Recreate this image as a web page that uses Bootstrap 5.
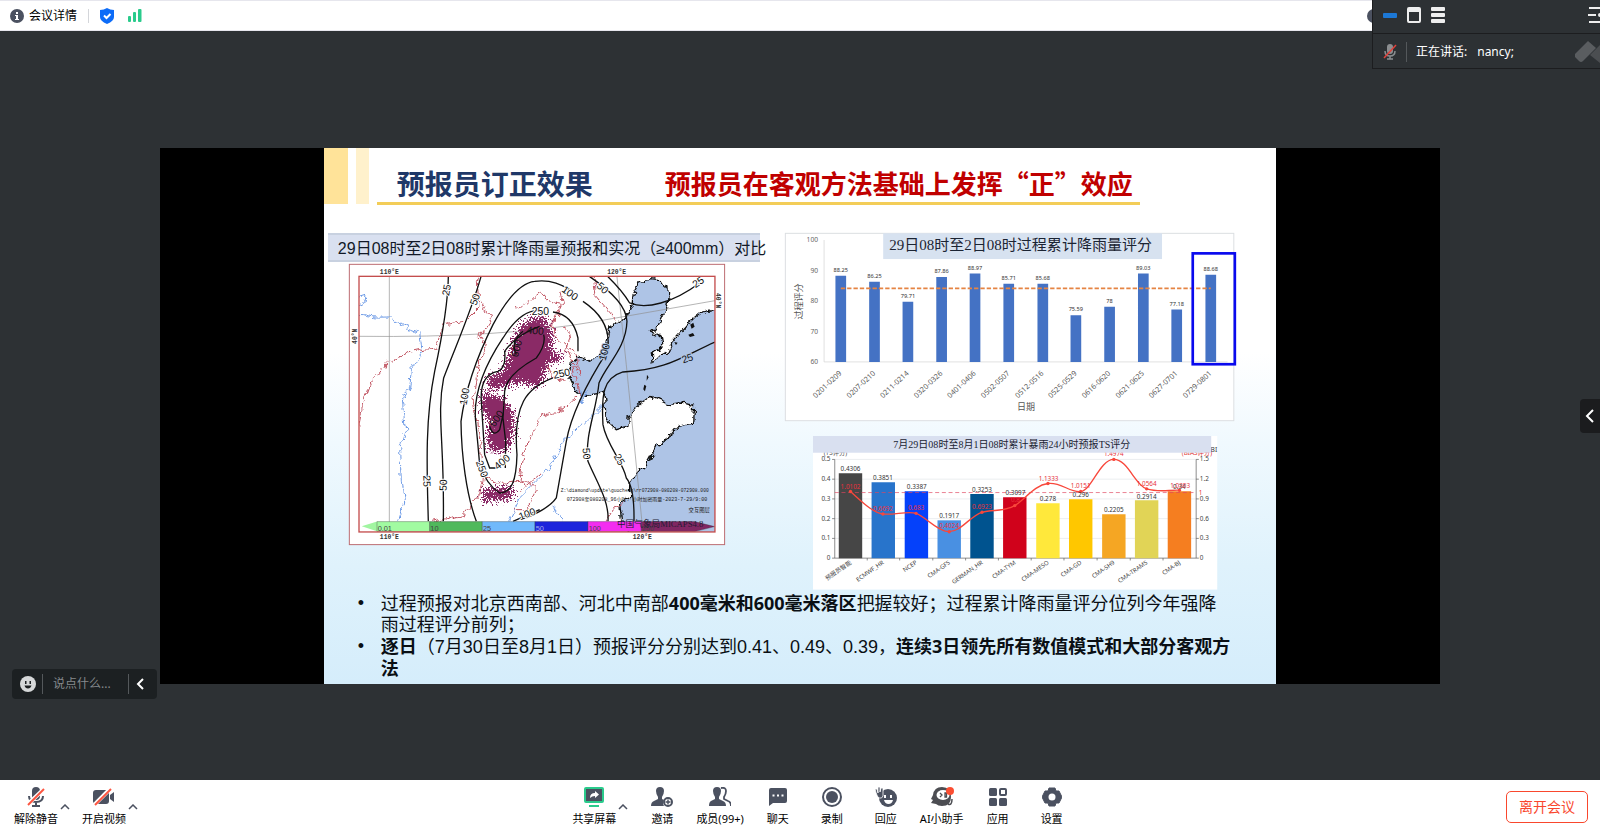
<!DOCTYPE html>
<html lang="zh-CN">
<head>
<meta charset="utf-8">
<meta name="viewport" content="width=device-width, initial-scale=1">
<title>会议</title>
<link href="https://cdn.jsdelivr.net/npm/bootstrap@5.3.0/dist/css/bootstrap.min.css" rel="stylesheet">
<style>
:root{--ink:#4b5160;--dark:#2d3134;--green:#2acb8c;--red:#f9472d}
body{font-family:"Noto Sans","Noto Sans CJK SC",sans-serif;font-size:12px;line-height:16px;color:#000;background:var(--dark)}
svg{display:block;flex:none}
.topline{height:31px;border-top:1px solid #e6e6ed;border-bottom:1px solid #e6e6ed}
.topline .btn,.tool{font-size:12px;line-height:16px;color:#000;border:0;padding:0}
.topline .btn{margin-left:10px;gap:5px}
.sep{width:1px;background:#d4d6da}
.topline .sep{height:14px;margin:0 11px}
.signal{margin-left:14px}
.info-end{margin-right:219px}
.stage{padding-top:21px;background:var(--dark)}
.video{width:80%;background:#000}
.slide{width:74.4%;background:linear-gradient(#fff 0,#fff 38%,#f0f9fe 55%,#dff2fc 78%,#d5edfb 100%)}
.slide-head{height:57px;padding-right:136px}
.tab-a{width:24px;height:56px;background:#ffe399}
.tab-b{width:13px;height:56px;background:#fff1cc}
.headline{min-width:0;border-bottom:3px solid #f3cd58;padding:17px 0 0 20px;white-space:nowrap}
.headline h1{font-size:28px;line-height:38px;color:#1f3868;font-weight:700}
.headline h2{font-size:26px;line-height:36px;color:#c00000;font-weight:700;padding-left:72px;font-family:"Noto Sans CJK SC",sans-serif}
.figures{display:grid;grid-template-columns:minmax(0,432fr) minmax(0,449fr);column-gap:25px;padding:28px 42px 0 4px}
.caption-l{height:29px;padding-left:10px;background:#d9e0f0;border-top:2px solid #c8d1e0;border-bottom:2px solid #c8d1e0;font-size:16px;line-height:27px;white-space:nowrap;color:#111827;font-family:"Liberation Sans","Noto Sans CJK SC",sans-serif}
.map-box{width:87%;margin:2px 0 0 21px}
.ts-box{width:90%;margin:15px 0 0 28px}
.figures svg{width:100%;height:auto;overflow:visible}
.points{font-family:"Liberation Sans","Noto Sans CJK SC",sans-serif;font-size:18px;line-height:21px;padding:3px 44px 4px 57px;color:#0a0f14;list-style:none}
.points b{font-family:"Noto Sans","Noto Sans CJK SC",sans-serif}
.points li{position:relative}
.points li::before{content:"•";position:absolute;left:-23px}
.saybox{left:12px;bottom:81px;width:145px;height:30px;background:#1c2022;border-radius:4px;padding:0 8px}
.saybox input{width:72px;background:none;border:0;outline:0;color:#ddd;font-size:12px;padding:0}
.saybox input::placeholder{color:#85898c;opacity:1}
.saybox .sep,.floater .sep{background:#54585b;height:20px}
.saybox .sep{margin:0 6px}
.drawer{right:0;top:368px;width:20px;height:34px;background:#1b1c1e;border:0;border-radius:4px 0 0 4px;padding:0 0 0 5px}
.floater{top:0;right:0;width:228px;height:69px;background:var(--dark);border:1px solid #1c1d1f;border-width:0 0 1px 1px;color:#fff;overflow:hidden}
.floater-top{height:34px;border-bottom:1px solid #1c1d1f;padding:0 0 4px 10px}
.floater-icons{gap:10px}
.speaking{height:36px;padding-left:10px}
.speaking .sep{margin:0 9px}
.speaking .who{margin-left:10px}
.floater button,.saybox button{background:none;border:0;padding:0}
.bottombar{background:#fff;height:52px;padding:2px 12px 0 14px}
.tool{background:none;font-size:11px;min-width:40px}
.tool svg{margin:0 auto 4px}
.chev{background:none;border:0;padding:0}
.chev svg{margin-left:2px}
.mid{gap:14px}
.leave{width:82px;height:32px;border:1px solid var(--red);color:var(--red);font-size:14px;line-height:20px;border-radius:5px;padding:0;background:#fff}
</style>
</head>
<body>
<div class="d-flex flex-column min-vh-100 position-relative overflow-hidden">
<header class="topline bg-white d-flex align-items-center">
  <button class="btn d-flex align-items-center" type="button">
    <svg width="14" height="14" viewBox="0 0 14 14"><circle cx="7" cy="7" r="7" fill="#4b5160"/><path d="M6 3h2v2H6zM5 6h3v4h1v1H5v-1h1V7H5z" fill="#fff"/></svg>
    <span>会议详情</span>
  </button>
  <span class="sep"></span>
  <svg width="14" height="16" viewBox="0 0 14 16"><path d="M7 0q3 2 7 2v7q0 4-7 7-7-3-7-7V2q4 0 7-2z" fill="#0c6cf8"/><path d="M4 7.500l2.500 2.500 4-4" stroke="#fff" stroke-width="2" fill="none"/></svg>
  <svg class="signal" width="14" height="13" viewBox="0 0 14 13" fill="#2acb8c"><rect y="7" width="3" height="6" rx="1"/><rect x="5" y="3" width="3" height="10" rx="1"/><rect x="10" width="3.500" height="13" rx="1"/></svg>
  <svg class="ms-auto info-end" width="14" height="14" viewBox="0 0 14 14"><circle cx="7" cy="7" r="7" fill="#4b5160"/></svg>
</header>

<main class="stage flex-grow-1 d-flex align-items-center justify-content-center position-relative">
  <div class="video d-flex justify-content-center">
    <article class="slide">
      <div class="slide-head d-flex">
        <span class="tab-a flex-shrink-0"></span><span class="tab-b flex-shrink-0 ms-2"></span>
        <div class="headline flex-grow-1 d-flex ms-2"><h1 class="m-0">预报员订正效果</h1><h2 class="m-0">预报员在客观方法基础上发挥“正”效应</h2></div>
      </div>
      <div class="figures">
        <div>
          <div class="caption-l">29日08时至2日08时累计降雨量预报和实况（≥400mm）对比</div>
          <div class="map-box">
<svg viewBox="28 28 1128 843" font-family="Liberation Sans, Noto Sans CJK SC, sans-serif">
<defs>
<filter id="rough" x="-5%" y="-5%" width="110%" height="110%"><feTurbulence type="fractalNoise" baseFrequency=".045" numOctaves="3" seed="4"/><feDisplacementMap in="SourceGraphic" scale="26" xChannelSelector="R" yChannelSelector="G"/></filter>
<filter id="grain" x="-10%" y="-10%" width="120%" height="120%"><feTurbulence type="fractalNoise" baseFrequency=".2" numOctaves="3" seed="8"/><feDisplacementMap in="SourceGraphic" scale="75" xChannelSelector="R" yChannelSelector="G"/></filter>
<clipPath id="frame"><rect x="58" y="66" width="1068" height="766"/></clipPath>
</defs>
<rect x="29" y="29" width="1126" height="841" fill="#fff" stroke="#bd6c72" stroke-width="3"/>
<g clip-path="url(#frame)">
<path filter="url(#rough)" d="M1150 155L1085 172 1040 210 1000 255 985 290 937 318 935 295 970 280 965 245 935 232 960 205 985 150 990 115 965 75 925 72 900 85 880 120 878 150 860 190 812 215 803 255 798 290 750 320 715 305 695 320 688 370 705 405 740 422 790 415 795 430 800 500 830 525 865 515 865 490 885 460 930 425 985 450 1020 445 1065 452 1062 505 1015 515 990 545 950 575 920 630 885 665 870 690 870 730 840 745 845 790 880 850H1150Z" fill="#aec4e6" stroke="#111" stroke-width="4"/>
<g fill="#111"><path d="M922 360l5 8-6 10zM914 390l6 4-4 16-5-6zM1052 210l9-6 4 12-9 6zM1046 240l14-5 5 8-14 4zM1004 262l10 2-5 7z"/></g>
<g fill="none" stroke="#8f8f8f" stroke-width="2"><path d="M149 66V832M832 66L860 330 910 832M58 245Q480 250 760 202L1126 138"/></g>
<g fill="none" stroke="#6d9be6" stroke-width="3" filter="url(#rough)"><path d="M58 178Q100 190 150 187L190 215 240 235 248 290 215 345 210 400 188 440 198 530 180 590 185 680 195 740 176 800M58 125l18-6-4 30-14 8M510 800L540 730 620 650 670 560 740 500 790 450M640 750l10 25 20 25"/><path d="M720 405l10 40 10-35" fill="#aec4e6"/></g>
<g fill="none" stroke="#c0515f" stroke-width="3" filter="url(#rough)"><path d="M58 510l10-50 25-70 50-65 60-30 45-10 40-5 20-70 70-10 40-40-5-80 10-40M425 135l30 60-35 50 20 30-25 60-15 100 20 120 10 110 40 20 90-10 30 30-30 60-40 0M280 800l90-20 50-60 10-60M530 160l40-20 35-30 20 30 40 10-20 40-5 50 70 60 8 60-40-80 20-50-25-10M760 66l10 60 60 70M700 340l20 80-50 45-70 25-50 110-10 60 20 40M545 705l60-50M800 800l20-40 30-10M620 320l20 50 40 10M660 110l10 40-20 40"/></g>
<g fill="#8a2a66" filter="url(#grain)"><path d="M580 185L625 195 640 245 635 290 672 300 655 320 622 325 615 370 595 395 540 385 450 405 440 370 490 350 520 260 545 210ZM425 415L490 425 525 480 520 550 500 590 450 590 440 550 450 500 425 465ZM430 705L520 695 520 730 430 742Z"/></g>
<g fill="none" stroke="#111" stroke-width="4">
<path d="M326 66C325 160 300 280 285 350 255 500 262 650 266 800M424 66C395 170 350 270 312 370 290 480 315 560 311 800M410 800C380 720 365 600 364 500 375 420 400 330 460 210 500 135 540 85 585 80Q640 72 690 105M730 140Q820 200 803 290 700 450 680 560L650 730Q630 760 560 790M520 800L600 765"/>
<path d="M805 66Q850 110 870 145C920 165 1000 145 1080 85M750 66Q860 140 862 200C860 280 800 330 778 385 770 470 735 540 745 620 770 680 810 740 805 800M1126 262C1020 310 980 345 850 352 790 370 785 420 790 510 800 570 850 620 860 670Q885 700 883 800"/>
<path d="M610 170Q550 155 490 250C430 340 400 420 408 500Q415 570 420 630 440 690 480 715C515 715 530 680 532 600 520 450 560 400 640 370M640 172Q700 180 715 250L715 290"/>
<path d="M600 215Q530 240 495 290 500 340 475 350 420 360 425 440L435 600 450 640 475 640M612 240Q620 270 590 310 500 360 495 410L490 490 498 560 497 640M450 515Q460 550 480 525L490 480M550 230Q510 260 530 300"/></g>
<g font-size="31" fill="#111" stroke="#fff" stroke-width="6" paint-order="stroke" text-anchor="middle">
<text transform="translate(331 108) rotate(-80)">25</text><text transform="translate(416 138) rotate(-70)">50</text><text transform="translate(685 124) rotate(35)">100</text><text transform="translate(782 108) rotate(42)">50</text><text transform="translate(1082 91) rotate(-35)">25</text><text transform="translate(385 427) rotate(-80)">100</text><text transform="translate(668 367) rotate(-12)">250</text><text transform="translate(251 680) rotate(88)">25</text><text transform="translate(321 692) rotate(-88)">50</text><text transform="translate(730 598) rotate(85)">50</text><text transform="translate(830 620) rotate(60)">25</text><text transform="translate(417 646) rotate(70)">250</text><text transform="translate(494 630) rotate(-40)">400</text><text transform="translate(566 788) rotate(-20)">100</text><text x="602" y="182">250</text></g>
<g font-size="31" fill="#111" text-anchor="middle"><text transform="translate(586 239) rotate(5)">400</text><text transform="translate(541 284) rotate(-75)">600</text><text transform="translate(479 498) rotate(-55)">600</text><g stroke="#aec4e6" stroke-width="6" paint-order="stroke"><text transform="translate(804 295) rotate(-75)">100</text><text transform="translate(1047 321) rotate(-20)">25</text></g></g>
<g font-family="Liberation Mono, Noto Sans CJK SC, monospace" font-size="14" fill="#222"><text x="663" y="712">Z:\diamond\update\guocheng\rr072908-080208-072908.000</text><text x="681" y="740" font-size="15">072908至080208_96小时:  小时加密雨量-2023-7-29/9:00</text><text x="1047" y="771" font-size="16">交互图层</text></g>
<g stroke="#333" stroke-width="1"><path d="M66 815L112 801V830Z" fill="#a1f5a1" stroke="none"/><path d="M112 801h158v30H112z" fill="#a1fba1"/><path d="M270 801h158v30H270z" fill="#50b95c"/><path d="M428 801h158v30H428z" fill="#70b9fb"/><path d="M586 801h159v30H586z" fill="#1d25dc"/><path d="M745 801h160v30H745z" fill="#f32df0"/><path d="M905 801h160l60 15-60 15H905z" fill="#812763"/></g>
<g font-size="22" fill="#444"><text x="114" y="828">0.01</text><text x="272" y="828">10</text><text x="430" y="828">25</text><text x="588" y="828" fill="#a8afe8">50</text><text x="747" y="828">100</text><text x="907" y="828">250</text></g>
<text x="832" y="816" font-size="26" fill="#241b35" font-family="Liberation Serif, Noto Sans CJK SC, serif">中国气象局MICAPS4.8</text>
</g>
<rect x="58" y="65" width="1068" height="767" fill="none" stroke="#c44d4d" stroke-width="4"/>
<g font-family="Liberation Mono, monospace" font-size="19" font-weight="700" fill="#333" text-anchor="middle"><text x="149" y="58">110°E</text><text x="831" y="58">120°E</text><text x="149" y="854">110°E</text><text x="908" y="854">120°E</text><text transform="translate(52 245) rotate(-90)">40°N</text><text transform="translate(1130 138) rotate(90)">40°N</text></g>
</svg>
          </div>
        </div>
        <div>
<svg viewBox="46 26 1345 562" font-family="Noto Sans, Noto Sans CJK SC, sans-serif">
<rect x="47" y="27" width="1343" height="561" fill="#fff" stroke="#dcdfe2" stroke-width="3"/>
<rect x="340" y="27" width="835" height="77" fill="#d7e2f0"/>
<text x="358" y="78" font-size="45" fill="#1b2433" font-family="Liberation Serif, Noto Sans CJK SC, serif">29日08时至2日08时过程累计降雨量评分</text>
<path d="M163 47V412H1371" fill="none" stroke="#d0d0d0" stroke-width="2"/>
<g fill="#4472c4"><path d="M197 154h32v258h-32zM298 172h32v240h-32zM398 232h32v180h-32zM499 158h32v254h-32zM599 147h32v265h-32zM700 178h32v234h-32zM802 178h32v234h-32zM901 272h32v140h-32zM1002 247h32v165h-32zM1103 147h32v265h-32zM1203 255h32v157h-32zM1305 151h32v261h-32z"/></g>
<path d="M213 192H1321" stroke="#e58443" stroke-width="5" stroke-dasharray="13 6"/>
<g font-size="17" fill="#333" text-anchor="middle"><text x="213" y="144">88.25</text><text x="314" y="161">86.25</text><text x="414" y="220">79.71</text><text x="515" y="147">87.86</text><text x="615" y="136">88.97</text><text x="716" y="167">85.71</text><text x="818" y="167">85.68</text><text x="917" y="261">75.59</text><text x="1018" y="237">78</text><text x="1119" y="136">89.03</text><text x="1219" y="245">77.18</text><text x="1321" y="141">88.68</text></g>
<g font-size="20" fill="#666" text-anchor="end"><text x="145" y="54">100</text><text x="145" y="146">90</text><text x="145" y="237">80</text><text x="145" y="328">70</text><text x="145" y="419">60</text></g>
<g font-size="22" fill="#555" text-anchor="end"><text transform="translate(217 448) rotate(-43)">0201-0209</text><text transform="translate(318 448) rotate(-43)">0207-0210</text><text transform="translate(418 448) rotate(-43)">0211-0214</text><text transform="translate(519 448) rotate(-43)">0320-0326</text><text transform="translate(619 448) rotate(-43)">0401-0406</text><text transform="translate(720 448) rotate(-43)">0502-0507</text><text transform="translate(822 448) rotate(-43)">0512-0516</text><text transform="translate(921 448) rotate(-43)">0525-0529</text><text transform="translate(1022 448) rotate(-43)">0616-0620</text><text transform="translate(1123 448) rotate(-43)">0621-0625</text><text transform="translate(1223 448) rotate(-43)">0627-0701</text><text transform="translate(1325 448) rotate(-43)">0729-0801</text></g>
<g font-size="27" fill="#555" text-anchor="middle"><text x="768" y="557">日期</text><text transform="translate(98 231) rotate(-90)">过程评分</text></g>
<rect x="1267" y="87" width="126" height="332" fill="none" stroke="#0909ee" stroke-width="8"/>
</svg>
          <div class="ts-box">
<svg viewBox="38 33 1208 459" font-family="Noto Sans, Noto Sans CJK SC, sans-serif">
<rect x="38" y="33" width="1208" height="459" fill="#fff"/>
<text x="70" y="89" font-size="19" fill="#555">(TS评分)</text><text x="1140" y="89" font-size="19" fill="#d33">(BIAS评分)</text><text x="1246" y="81" font-size="20" fill="#333" text-anchor="end">BI</text>
<path d="M103 103H1183M103 162H1183M103 221H1183M103 280H1183M103 339H1183" stroke="#e3e5e8" stroke-width="2"/>
<path d="M95 103h8V398h-8M95 162h8M95 221h8M95 280h8M95 339h8M1191 103h-8V398h8M1191 162h-8M1191 221h-8M1191 280h-8M1191 339h-8M103 398H1183" fill="none" stroke="#555" stroke-width="2"/>
<path d="M200 398v7M297 398v7M396 398v7M494 398v7M592 398v7M690 398v7M788 398v7M887 398v7M986 398v7M1084 398v7" stroke="#555" stroke-width="2"/>
<path fill="#464646" d="M115 144h70v254h-70z"/><path fill="#2874cb" d="M213 171h70v227h-70z"/><path fill="#0541fa" d="M312 198h70v200h-70z"/><path fill="#4990e2" d="M410 285h70v113h-70z"/><path fill="#00538f" d="M508 206h70v192h-70z"/><path fill="#d0021b" d="M606 216h70v182h-70z"/><path fill="#ffe83b" d="M705 234h70v164h-70z"/><path fill="#ffc700" d="M803 222h70v176h-70z"/><path fill="#f5a623" d="M902 267h70v131h-70z"/><path fill="#e1d456" d="M1000 225h70v173h-70z"/><path fill="#f57e20" d="M1098 198h70v200h-70z"/>
<path d="M103 202H1183" stroke="#e0475e" stroke-width="2" stroke-dasharray="12 8"/>
<path d="M150 199C180 225 215 262 247 266S320 256 346 264 410 319 445 319 510 270 543 261 610 260 641 241 700 180 740 175 805 203 838 199 895 103 937 103 1000 180 1035 191 1100 194 1133 195" fill="none" stroke="#f8473b" stroke-width="4"/>
<g fill="#f8473b"><circle cx="150" cy="199" r="5"/><circle cx="247" cy="266" r="5"/><circle cx="346" cy="264" r="5"/><circle cx="445" cy="319" r="5"/><circle cx="543" cy="261" r="5"/><circle cx="641" cy="241" r="5"/><circle cx="740" cy="175" r="5"/><circle cx="838" cy="199" r="5"/><circle cx="937" cy="103" r="5"/><circle cx="1035" cy="191" r="5"/><circle cx="1133" cy="195" r="5"/></g>
<g font-size="19" fill="#333" text-anchor="middle"><text x="150" y="138">0.4306</text><text x="247" y="165">0.3851</text><text x="348" y="192">0.3387</text><text x="445" y="278">0.1917</text><text x="543" y="200">0.3253</text><text x="643" y="210">0.3097</text><text x="740" y="228">0.278</text><text x="838" y="216">0.296</text><text x="937" y="261">0.2205</text><text x="1035" y="220">0.2914</text><text x="1133" y="191">0.34</text></g>
<g font-size="19" fill="#e8313d" text-anchor="middle"><text x="150" y="191">1.0102</text><text x="247" y="257">0.6692</text><text x="346" y="254">0.683</text><text x="445" y="309">0.4024</text><text x="543" y="252">0.6923</text><text x="643" y="231">0.8</text><text x="742" y="166">1.1333</text><text x="838" y="188">1.0151</text><text x="937" y="94">1.4974</text><text x="1035" y="182">1.0564</text><text x="1135" y="187">1.0303</text><text x="1196" y="208">1</text></g>
<g font-size="19" fill="#444" text-anchor="end"><text x="90" y="109">0.5</text><text x="90" y="168">0.4</text><text x="90" y="227">0.3</text><text x="90" y="286">0.2</text><text x="90" y="345">0.1</text><text x="90" y="404">0</text></g>
<g font-size="19" fill="#444"><text x="1194" y="109">1.5</text><text x="1194" y="168">1.2</text><text x="1194" y="227">0.9</text><text x="1194" y="286">0.6</text><text x="1194" y="345">0.3</text><text x="1194" y="404">0</text></g>
<g font-size="18" fill="#444" text-anchor="end"><text transform="translate(154 414) rotate(-35)">预报员智能</text><text transform="translate(251 414) rotate(-35)">ECMWF_HR</text><text transform="translate(350 414) rotate(-35)">NCEP</text><text transform="translate(449 414) rotate(-35)">CMA-GFS</text><text transform="translate(547 414) rotate(-35)">GERMAN_HR</text><text transform="translate(645 414) rotate(-35)">CMA-TYM</text><text transform="translate(744 414) rotate(-35)">CMA-MESO</text><text transform="translate(842 414) rotate(-35)">CMA-GD</text><text transform="translate(941 414) rotate(-35)">CMA-SH9</text><text transform="translate(1039 414) rotate(-35)">CMA-TRAMS</text><text transform="translate(1137 414) rotate(-35)">CMA-BJ</text></g>
<rect x="38" y="33" width="1190" height="50" fill="#d9e0f0"/>
<text x="278" y="68" font-size="30" fill="#1b2433" font-family="Liberation Serif, Noto Sans CJK SC, serif">7月29日08时至8月1日08时累计暴雨24小时预报TS评分</text>
</svg>
          </div>
        </div>
      </div>
      <ul class="points m-0">
        <li>过程预报对北京西南部、河北中南部<b>400毫米和600毫米落区</b>把握较好；过程累计降雨量评分位列今年强降雨过程评分前列；</li>
        <li><b>逐日</b>（7月30日至8月1日）预报评分分别达到0.41、0.49、0.39，<b>连续3日领先所有数值模式和大部分客观方法</b></li>
      </ul>
    </article>
  </div>
  <div class="saybox position-absolute d-flex align-items-center">
    <button type="button" aria-label="表情"><svg width="16" height="16" viewBox="0 0 16 16"><circle cx="8" cy="8" r="8" fill="#d6d8d9"/><path d="M5 5h1.500v3H5zM9.500 5H11v3H9.500zM4.500 9.500h7q-.8 3-3.500 3t-3.500-3z" fill="#1c2022"/></svg></button>
    <span class="sep"></span>
    <input type="text" placeholder="说点什么..." aria-label="说点什么" class="ms-1">
    <span class="sep ms-auto"></span>
    <button class="me-1" type="button" aria-label="收起"><svg width="10" height="12" viewBox="0 0 10 12"><path d="M8 1L3 6l5 5" fill="none" stroke="#fff" stroke-width="2"/></svg></button>
  </div>
  <button class="drawer position-absolute" type="button" aria-label="展开"><svg width="10" height="14" viewBox="0 0 10 14"><path d="M8 1L2 7l6 6" fill="none" stroke="#fff" stroke-width="2"/></svg></button>
</main>

<footer class="bottombar d-flex align-items-center justify-content-between">
  <div class="d-flex align-items-center">
    <button class="tool" type="button"><svg width="20" height="20" viewBox="0 0 20 20"><rect x="6" y="0" width="8" height="13" rx="4" fill="#4b5160"/><path d="M3 9q0 6 7 6t7-6M10 15v4M6 19h8" fill="none" stroke="#4b5160" stroke-width="2"/><path d="M2 17L18 2" stroke="#fff" stroke-width="4"/><path d="M2 18L18 2" stroke="#fc5540" stroke-width="2"/></svg>解除静音</button>
    <button class="chev me-2" type="button" aria-label="音频选项"><svg width="10" height="6" viewBox="0 0 10 6"><path d="M1 5l4-4 4 4" fill="none" stroke="#4b5160" stroke-width="1.500"/></svg></button>
    <button class="tool ms-1" type="button"><svg width="22" height="20" viewBox="0 0 22 20"><rect y="3" width="16" height="14" rx="3" fill="#4b5160"/><path d="M17 8l4-3v10l-4-3z" fill="#4b5160"/><path d="M1 18L17 2" stroke="#fff" stroke-width="4"/><path d="M2 18L18 2" stroke="#fc5540" stroke-width="2"/></svg>开启视频</button>
    <button class="chev" type="button" aria-label="视频选项"><svg width="10" height="6" viewBox="0 0 10 6"><path d="M1 5l4-4 4 4" fill="none" stroke="#4b5160" stroke-width="1.500"/></svg></button>
  </div>
  <div class="mid d-flex align-items-center">
    <div class="d-flex align-items-center">
      <button class="tool" type="button"><svg width="20" height="20" viewBox="0 0 20 20"><rect x="1" y="1" width="18" height="14" rx="1" fill="#4b5160" stroke="#2acb8c" stroke-width="2"/><path d="M5 19h10" stroke="#2acb8c" stroke-width="2"/><path d="M6 11q0-5 5-5V4l4 3.500-4 3.500V9q-3 0-5 2z" fill="#fff"/></svg>共享屏幕</button>
      <button class="chev" type="button" aria-label="共享选项"><svg width="10" height="6" viewBox="0 0 10 6"><path d="M1 5l4-4 4 4" fill="none" stroke="#4b5160" stroke-width="1.500"/></svg></button>
    </div>
    <button class="tool" type="button"><svg width="22" height="20" viewBox="0 0 22 20" fill="#4b5160"><path d="M5 4q0-4 4-4t4 4q0 3-2 6v2l2 1q-2 3 0 6H0q0-4 3-5l4-2v-2Q5 7 5 4z"/><circle cx="17" cy="15" r="4" fill="#fff" stroke="#4b5160" stroke-width="2"/><path d="M16.300 12.500h1.400v1.800h1.800v1.400h-1.800v1.800h-1.400v-1.800h-1.800v-1.400h1.800z"/></svg>邀请</button>
    <button class="tool" type="button"><svg width="22" height="20" viewBox="0 0 22 20" fill="#4b5160"><path d="M4 4q0-4 4-4t4 4q0 3-2 6v2l4 2q3 1 3 5H0q0-4 2-5l4-2v-2Q4 7 4 4z"/><path d="M12 1q5-1 5 3 0 3-2 6v2l4 2q3 1 3 5" fill="none" stroke="#4b5160" stroke-width="1.800"/></svg>成员(99+)</button>
    <button class="tool" type="button"><svg width="20" height="20" viewBox="0 0 20 20"><path d="M3 1h14q2 0 2 2v11q0 2-2 2H5l-4 3V3q0-2 2-2z" fill="#4b5160"/><path d="M4.500 7.500h2v2h-2zM9 7.500h2v2H9zM13.500 7.500h2v2h-2z" fill="#fff"/></svg>聊天</button>
    <button class="tool" type="button"><svg width="20" height="20" viewBox="0 0 20 20"><circle cx="10" cy="10" r="9" fill="none" stroke="#4b5160" stroke-width="2"/><circle cx="10" cy="10" r="6" fill="#4b5160"/></svg>录制</button>
    <button class="tool" type="button"><svg width="22" height="20" viewBox="0 0 22 20"><circle cx="13" cy="11" r="9" fill="#4b5160"/><path d="M9 8h2v3H9zM15 8h2v3h-2zM9 13h9q-1 4-4.500 4T9 13z" fill="#fff"/><path d="M0 2l2 0 1 4V0h2v5l1-4h2v8q-1 3-4 2-2-1-4-9z" fill="#4b5160" stroke="#fff" stroke-width=".8"/></svg>回应</button>
    <button class="tool" type="button"><svg width="26" height="20" viewBox="0 0 26 20"><path d="M4 8Q5 0 13 0q9 0 9 10 0 9-9 9-4 0-6-2l-5-1 2-3-2-1z" fill="#4c4d52"/><ellipse cx="14" cy="8" rx="6.500" ry="5" fill="#fff"/><path d="M11 6l2 2-2 2M16 6h1.500v4H16z" stroke="#4c4d52" fill="none" stroke-width="1.300"/><path d="M19 17q4 2 4-5" fill="none" stroke="#4c4d52" stroke-width="1.500"/><circle cx="21" cy="4" r="4" fill="#fb4e32"/></svg>AI小助手</button>
    <button class="tool" type="button"><svg width="20" height="20" viewBox="0 0 20 20" fill="#4b5160"><rect x="1" y="1" width="8" height="8" rx="1.500"/><rect x="12" y="2" width="6" height="6" rx="1" fill="none" stroke="#4b5160" stroke-width="2"/><rect x="1" y="11" width="8" height="8" rx="1.500"/><rect x="11" y="11" width="8" height="8" rx="1.500"/></svg>应用</button>
    <button class="tool" type="button"><svg width="20" height="20" viewBox="0 0 20 20"><path d="M7 1h6l1 3h3l3 6-3 6h-3l-1 3H7l-1-3H3l-3-6 3-6h3z" fill="#4b5160" stroke="#4b5160" stroke-linejoin="round"/><circle cx="10" cy="10" r="3.500" fill="#fff"/></svg>设置</button>
  </div>
  <button class="leave" type="button">离开会议</button>
</footer>

<aside class="floater position-absolute">
  <div class="floater-top floater-icons d-flex align-items-center">
    <button type="button" aria-label="最小化"><svg width="14" height="16" viewBox="0 0 14 16"><rect y="6" width="14" height="5" rx="1" fill="#1c78d6"/></svg></button>
    <button type="button" aria-label="窗口"><svg width="14" height="16" viewBox="0 0 14 16"><path d="M1 2q0-1 1-1h10q1 0 1 1v12q0 1-1 1H2q-1 0-1-1z" fill="none" stroke="#eee" stroke-width="2"/><path d="M1 1h12v4H1z" fill="#eee"/></svg></button>
    <button type="button" aria-label="列表"><svg width="14" height="16" viewBox="0 0 14 16" fill="#eee"><rect y="0" width="14" height="4" rx="1"/><rect y="6" width="14" height="4" rx="1"/><rect y="12" width="14" height="4" rx="1"/></svg></button>
    <button class="ms-auto" type="button" aria-label="菜单"><svg width="12" height="16" viewBox="0 0 12 16"><path d="M1 1h11M0 8h8M1 15h11" stroke="#eee" stroke-width="2"/><circle cx="12" cy="8" r="2" fill="#eee"/></svg></button>
  </div>
  <div class="speaking d-flex align-items-center">
    <svg width="14" height="16" viewBox="0 0 14 16"><rect x="4" y="0" width="6" height="10" rx="3" fill="#8b8e90"/><path d="M2 7q0 5 5 5t5-5M7 12v3M4 15h6" fill="none" stroke="#8b8e90" stroke-width="1.500"/><path d="M1 14L13 1" stroke="#e0413b" stroke-width="1.500"/></svg>
    <span class="sep"></span><span>正在讲话:</span><span class="who">nancy;</span>
    <svg class="ms-auto" width="25" height="24" viewBox="0 0 25 24"><path d="M0 14L13 1l8 7L8 21q-2 2-4 0l-4-4z" fill="#5a5d60"/><path d="M15 15L25 5v18z" fill="#4b4e51"/></svg>
  </div>
</aside>
</div>
<script src="https://cdn.jsdelivr.net/npm/bootstrap@5.3.0/dist/js/bootstrap.bundle.min.js"></script>
</body>
</html>
